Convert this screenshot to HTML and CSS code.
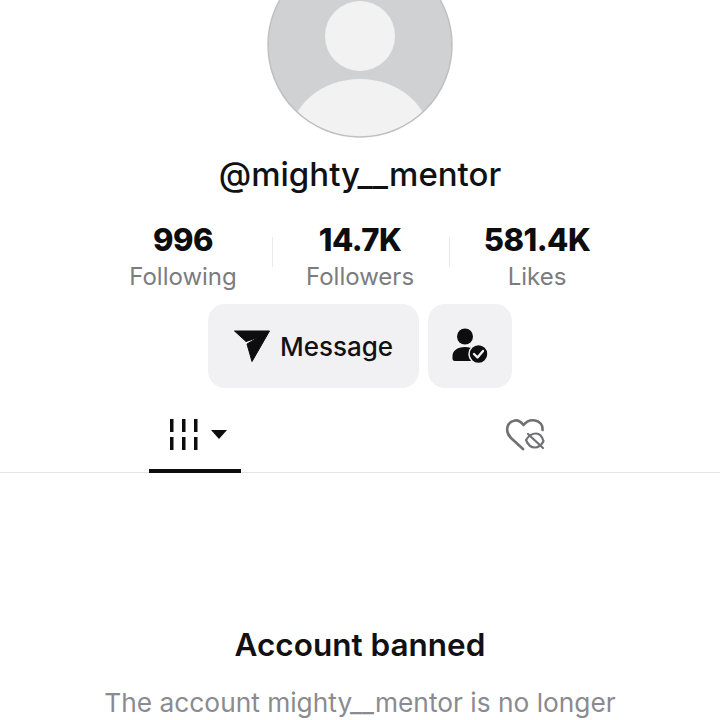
FILE: index.html
```html
<!DOCTYPE html>
<html lang="en">
<head>
    <meta charset="UTF-8">
    <meta name="viewport" content="width=device-width, initial-scale=1.0">
    <title>@mighty__mentor</title>
    <link rel="stylesheet" href="styles.css">
</head>
<body>
    <div class="profile">
        <svg class="avatar" width="186" height="186" viewBox="0 0 186 186">
            <defs>
                <clipPath id="avatar-clip"><circle cx="93" cy="93" r="92"/></clipPath>
            </defs>
            <circle cx="93" cy="93" r="92" fill="#d0d1d3"/>
            <g clip-path="url(#avatar-clip)" fill="#f2f2f2">
                <circle cx="93" cy="84" r="35"/>
                <ellipse cx="93" cy="187" rx="70" ry="60"/>
            </g>
            <circle cx="93" cy="93" r="92" fill="none" stroke="#bfc0c2" stroke-width="1.5"/>
        </svg>

        <h1 class="username">@mighty__mentor</h1>

        <div class="stats">
            <div class="stat">
                <strong>996</strong>
                <span>Following</span>
            </div>
            <div class="stat">
                <strong>14.7K</strong>
                <span>Followers</span>
            </div>
            <div class="stat">
                <strong>581.4K</strong>
                <span>Likes</span>
            </div>
        </div>

        <div class="actions">
            <button class="btn btn-message">
                <svg width="36" height="32" viewBox="0 0 36 32">
                    <path d="M0.5 1H35.500L18 31.500L13 14L24 7.500L12 11.500Z" fill="#0d0d0f" stroke="#0d0d0f" stroke-width="1" stroke-linejoin="round"/>
                </svg>
                Message
            </button>
            <button class="btn btn-friend" aria-label="Following">
                <svg width="36" height="36" viewBox="0 0 36 36">
                    <circle cx="13" cy="8.500" r="8" fill="#0d0d0f"/>
                    <path d="M0.500 33V28C0.500 23 5 19 13 19C21 19 25.500 23 25.500 28V33H3Q0.500 33 0.500 31Z" fill="#0d0d0f"/>
                    <circle cx="26.500" cy="26" r="9.500" fill="#0d0d0f" stroke="#f1f1f3" stroke-width="1.500"/>
                    <path d="M22 26L25.500 29.500L31 23" fill="none" stroke="#f1f1f3" stroke-width="2.400" stroke-linecap="round" stroke-linejoin="round"/>
                </svg>
            </button>
        </div>

        <div class="tabs">
            <div class="tab tab-active">
                <svg width="60" height="32" viewBox="0 0 60 32">
                    <g fill="#0d0d0f">
                        <rect x="1" y="0" width="3.500" height="13"/>
                        <rect x="1" y="18" width="3.500" height="13"/>
                        <rect x="13" y="0" width="3.500" height="13"/>
                        <rect x="13" y="18" width="3.500" height="13"/>
                        <rect x="25" y="0" width="3.500" height="13"/>
                        <rect x="25" y="18" width="3.500" height="13"/>
                        <path d="M42 11H58L50 20Z"/>
                    </g>
                </svg>
            </div>
            <div class="tab">
                <svg width="40" height="34" viewBox="0 0 40 34" fill="none" stroke="#707175" stroke-width="2.600" stroke-linecap="round" stroke-linejoin="round">
                    <path d="M18 31L6 20C0 14 1 4 10 2.500C13 2 16 4 18.500 7C21 4 25 1.500 30 2.500C35 3.500 38 7 37.500 12"/>
                    <path d="M21 22C24 17 28 15.500 31 15.500C34 15.500 37 18 38.500 23C37 27 33 29.500 30 29.500C26 29.500 23 27 21 22Z" stroke-width="2.200"/>
                    <path d="M23 16L38 30" stroke-width="2.200"/>
                </svg>
            </div>
        </div>

        <div class="notice">
            <h2>Account banned</h2>
            <p>The account mighty__mentor is no longer</p>
        </div>
    </div>
</body>
</html>
```

FILE: styles.css
```css
* {
    box-sizing: border-box;
    margin: 0;
    padding: 0;
}

html, body {
    height: 720px;
    overflow: hidden;
}

body {
    background-color: #fff;
    color: #0d0d0f;
    font-family: Inter, 'Liberation Sans', sans-serif;
}

.profile {
    display: flex;
    flex-direction: column;
    align-items: center;
}

.avatar {
    display: block;
    margin-top: -48px;
}

.username {
    margin-top: 16px;
    font-size: 33px;
    font-weight: 500;
    line-height: 40px;
    color: #111114;
}

.stats {
    display: grid;
    grid-template-columns: repeat(3, 177px);
    margin-top: 26px;
}

.stat {
    position: relative;
    display: flex;
    flex-direction: column;
    align-items: center;
}

/* thin divider between the columns */
.stat + .stat::before {
    content: "";
    position: absolute;
    left: 0;
    top: 17px;
    width: 1px;
    height: 30px;
    background-color: #e9e9ea;
}

.stat strong {
    font-size: 31px;
    font-weight: 800;
    line-height: 40px;
    letter-spacing: -0.5px;
}

.stat span {
    font-size: 24px;
    line-height: 34px;
    color: #7b7c80;
}

.actions {
    display: flex;
    gap: 9px;
    margin-top: 10px;
}

.btn {
    display: flex;
    align-items: center;
    justify-content: center;
    height: 84px;
    border: none;
    border-radius: 17px;
    background-color: #f1f1f3;
    color: #111114;
    font-family: inherit;
}

.btn-message {
    width: 211px;
    gap: 10px;
    font-size: 26px;
    font-weight: 500;
}

.btn-friend {
    width: 84px;
}

.tabs {
    display: grid;
    grid-template-columns: 330px 330px;
    justify-content: center;
    width: 100%;
    height: 85px;
    border-bottom: 1px solid #e4e4e6;
}

.tab {
    position: relative;
    display: flex;
    align-items: center;
    justify-content: center;
    padding-top: 10px;
}

.tab:first-child {
    padding-left: 8px;
}

.tab-active::after {
    content: "";
    position: absolute;
    left: 119px;
    bottom: -1px;
    width: 92px;
    height: 4px;
    background-color: #0d0d0f;
}

.notice {
    margin-top: 152px;
    text-align: center;
}

.notice h2 {
    font-size: 31.500px;
    font-weight: 600;
    line-height: 40px;
    color: #111114;
}

.notice p {
    margin-top: 20px;
    font-size: 26.300px;
    line-height: 36px;
    color: #8a8b90;
    white-space: nowrap;
}
```
